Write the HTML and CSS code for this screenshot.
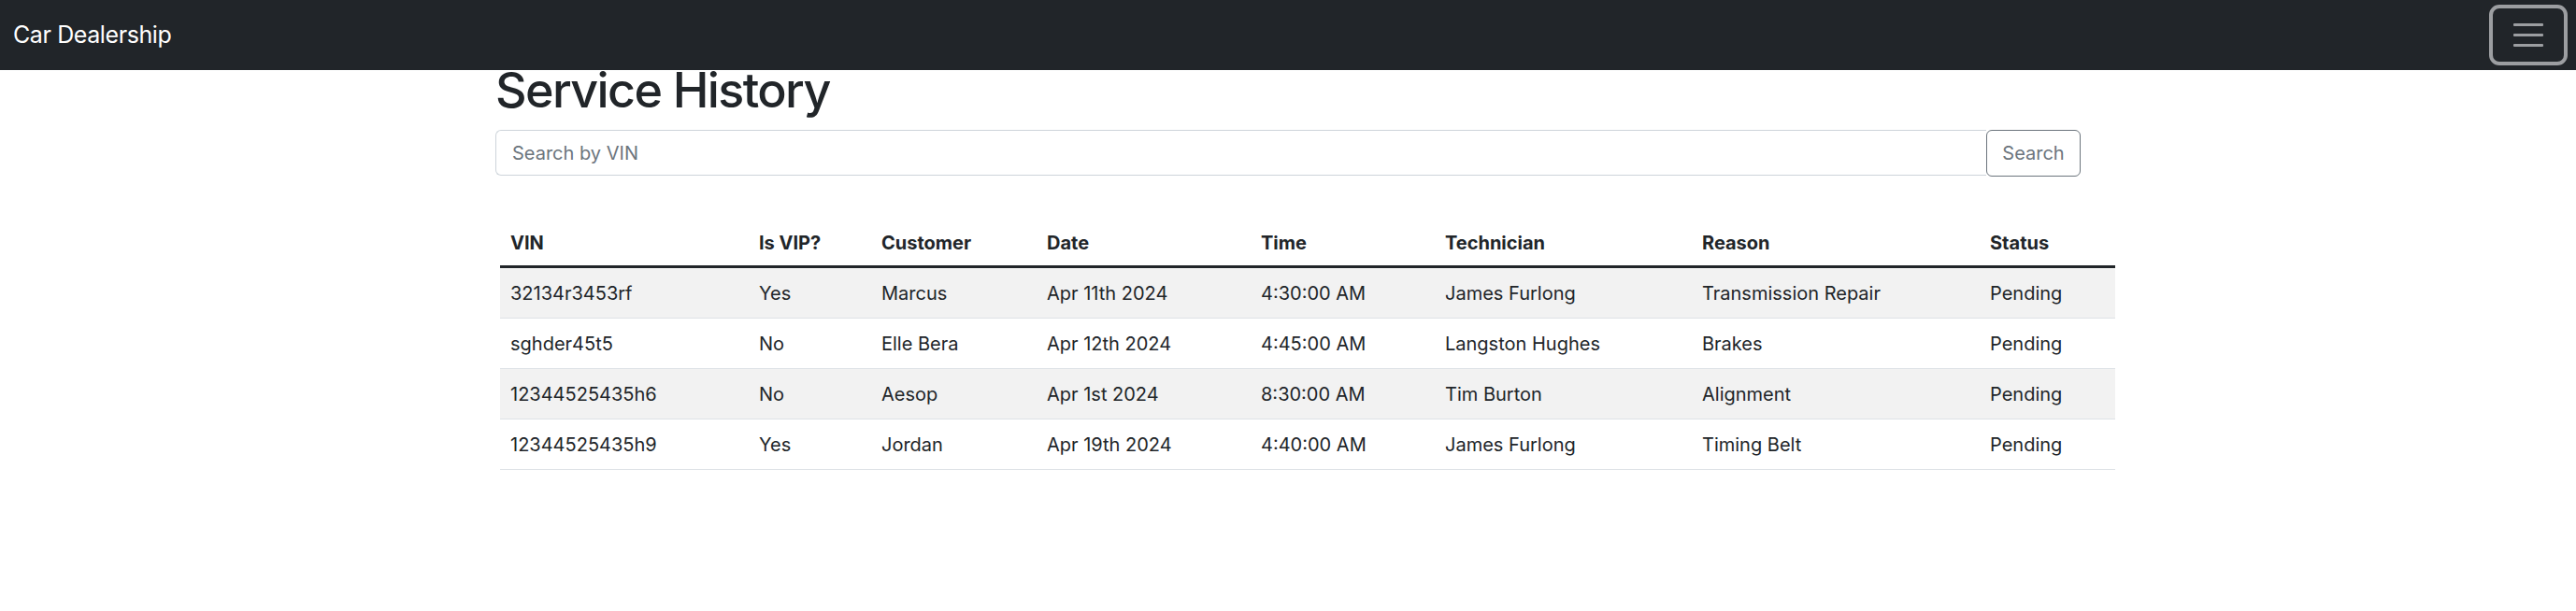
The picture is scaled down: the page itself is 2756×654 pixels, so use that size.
FILE: index.html
```html
<!DOCTYPE html>
<html lang="en">
<head>
<meta charset="utf-8">
<title>Car Dealership</title>
<link rel="stylesheet" href="styles.css">
</head>
<body>
<nav class="navbar">
  <a class="brand" href="#">Car Dealership</a>
  <button class="toggler" type="button" aria-label="Toggle navigation">
    <span class="bars"><span></span><span></span><span></span></span>
  </button>
</nav>
<main class="container">
  <h1 class="title">Service History</h1>
  <form class="search">
    <input class="search-input" type="text" placeholder="Search by VIN">
    <button class="search-btn" type="button">Search</button>
  </form>
  <table class="history">
    <thead>
      <tr>
        <th class="c-vin">VIN</th>
        <th class="c-vip">Is VIP?</th>
        <th class="c-cust">Customer</th>
        <th class="c-date">Date</th>
        <th class="c-time">Time</th>
        <th class="c-tech">Technician</th>
        <th class="c-reason">Reason</th>
        <th class="c-status">Status</th>
      </tr>
    </thead>
    <tbody>
      <tr><td>32134r3453rf</td><td>Yes</td><td>Marcus</td><td>Apr 11th 2024</td><td>4:30:00 AM</td><td>James Furlong</td><td>Transmission Repair</td><td>Pending</td></tr>
      <tr><td>sghder45t5</td><td>No</td><td>Elle Bera</td><td>Apr 12th 2024</td><td>4:45:00 AM</td><td>Langston Hughes</td><td>Brakes</td><td>Pending</td></tr>
      <tr><td>12344525435h6</td><td>No</td><td>Aesop</td><td>Apr 1st 2024</td><td>8:30:00 AM</td><td>Tim Burton</td><td>Alignment</td><td>Pending</td></tr>
      <tr><td>12344525435h9</td><td>Yes</td><td>Jordan</td><td>Apr 19th 2024</td><td>4:40:00 AM</td><td>James Furlong</td><td>Timing Belt</td><td>Pending</td></tr>
    </tbody>
  </table>
</main>
</body>
</html>
```
FILE: styles.css
```css
* { box-sizing: border-box; }

body {
  margin: 0;
  font-family: Inter, "Liberation Sans", Arial, sans-serif;
  color: #212529;
  background: #fff;
  font-size: 20px;
  line-height: 1.5;
}

.navbar {
  height: 75px;
  background: #212529;
  display: flex;
  align-items: center;
  justify-content: space-between;
  padding: 0 9px 0 14px;
}

.brand {
  color: #fff;
  text-decoration: none;
  font-size: 25px;
  letter-spacing: -0.4px;
  line-height: 1;
}

.toggler {
  width: 84px;
  height: 65px;
  background: transparent;
  border: 4px solid #9c9ea1;
  border-radius: 11px;
  padding: 0;
  display: flex;
  align-items: center;
  justify-content: center;
}

.bars {
  display: flex;
  flex-direction: column;
  gap: 8px;
  width: 32px;
}

.bars span {
  display: block;
  height: 3px;
  background: #9c9ea1;
  border-radius: 1px;
}

.container {
  width: 1696px;
  margin: 0 auto;
}

.title {
  margin: 0 0 20px;
  font-size: 52px;
  font-weight: 500;
  line-height: 44px;
  letter-spacing: -1.6px;
}

.search {
  display: flex;
  height: 50px;
  margin: 0;
}

.search-input {
  flex: 1;
  height: 49px;
  border: 1px solid #ced4da;
  border-right: none;
  border-radius: 6px 0 0 6px;
  padding: 0 17px;
  font: inherit;
  font-size: 20px;
  color: #212529;
}

.search-input::placeholder { color: #6c757d; }

.search-btn {
  width: 101px;
  height: 50px;
  border: 1px solid #6c757d;
  border-radius: 6px;
  background: #fff;
  color: #6c757d;
  font: inherit;
  font-size: 20px;
  padding: 0;
}

.history {
  margin: 44px 0 0 5px;
  width: 1728px;
  border-collapse: collapse;
}

.history th,
.history td {
  text-align: left;
  padding: 12px 11px 11px;
  white-space: nowrap;
}

.history th {
  font-weight: 700;
  padding-bottom: 9px;
  border-bottom: 3px solid #212529;
}

.history td { border-bottom: 1px solid #dee2e6; }

.history tbody tr:nth-child(odd) td { background: #f2f2f2; }

.c-vin { width: 266px; }
.c-vip { width: 131px; }
.c-cust { width: 177px; }
.c-date { width: 229px; }
.c-time { width: 197px; }
.c-tech { width: 275px; }
.c-reason { width: 308px; }
.c-status { width: 145px; }
```
